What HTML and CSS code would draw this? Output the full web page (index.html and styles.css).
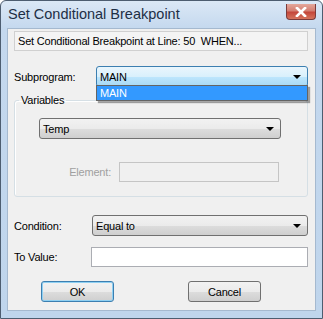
FILE: index.html
```html
<!DOCTYPE html>
<html lang="en">
<head>
    <meta charset="UTF-8">
    <title>Set Conditional Breakpoint</title>
    <link rel="stylesheet" href="styles.css">
</head>
<body>
    <!-- Ventana del diálogo -->
    <div class="window">
        <div class="titlebar">
            <span class="title">Set Conditional Breakpoint</span>
            <span class="close-btn">
                <svg width="14" height="10" viewBox="0 0 14 10">
                    <path d="M3 1 L11 9 M11 1 L3 9" stroke="#ffffff" stroke-width="2.6" stroke-linecap="square"/>
                </svg>
            </span>
        </div>

        <div class="client">
            <div class="info-box">Set Conditional Breakpoint at Line: 50&nbsp; WHEN...</div>

            <!-- Subprograma -->
            <div class="row row-sub">
                <span class="label">Subprogram:</span>
                <div class="combo combo-open combo-sub">
                    <span>MAIN</span>
                    <span class="arrow"></span>
                    <div class="drop-list">MAIN</div>
                </div>
            </div>

            <!-- Variables -->
            <fieldset class="group">
                <legend>Variables</legend>
                <div class="combo combo-temp">
                    <span>Temp</span>
                    <span class="arrow"></span>
                </div>
                <div class="element-row">
                    <span class="label disabled">Element:</span>
                    <div class="textbox textbox-disabled"></div>
                </div>
            </fieldset>

            <!-- Condición -->
            <div class="row row-cond">
                <span class="label">Condition:</span>
                <div class="combo combo-cond">
                    <span>Equal to</span>
                    <span class="arrow"></span>
                </div>
            </div>

            <div class="row row-value">
                <span class="label">To Value:</span>
                <div class="textbox textbox-value"></div>
            </div>

            <!-- Botones -->
            <div class="buttons">
                <button class="btn btn-default">OK</button>
                <button class="btn">Cancel</button>
            </div>
        </div>
    </div>
</body>
</html>
```

FILE: styles.css
```css
/* Estilos generales */
body {
    margin: 0;
    padding: 0;
    background-color: #ffffff;
    font-family: "Liberation Sans", Arial, sans-serif;
    font-size: 11px;
    letter-spacing: -0.2px;
    color: #000;
}

/* Marco de la ventana */
.window {
    width: 323px;
    height: 319px;
    box-sizing: border-box;
    border: 1px solid #4d5d70;
    border-radius: 6px 6px 0 0;
    background: linear-gradient(to bottom, #dbe8f6 0px, #c4d8ee 28px, #bfd5ec 100%);
    padding: 0 7px 7px 7px;
    display: flex;
    flex-direction: column;
}

.titlebar {
    height: 27px;
    display: flex;
    align-items: flex-start;
    justify-content: space-between;
}

.title {
    font-size: 14.5px;
    letter-spacing: 0;
    color: #1e2f45;
    margin-top: 5px;
}

.close-btn {
    width: 30px;
    height: 16px;
    margin-top: 3px;
    margin-right: -1px;
    box-sizing: border-box;
    border: 1px solid #7a3b3b;
    border-radius: 0 0 4px 4px;
    border-top: none;
    background: linear-gradient(to bottom, #e4a89c 0%, #d47f72 45%, #c4473b 55%, #d5745d 100%);
    display: flex;
    align-items: center;
    justify-content: center;
}

/* Área cliente */
.client {
    flex: 1;
    background-color: #f0f0f0;
    border: 1px solid #a5b9cf;
    margin-left: -1px;
    margin-right: -1px;
    padding: 2px 7px 0 6px;
    display: flex;
    flex-direction: column;
}

.info-box {
    height: 20px;
    box-sizing: border-box;
    border: 1px solid #d0d0d0;
    background-color: #f4f4f4;
    padding: 2px 3px;
    line-height: 15px;
    white-space: nowrap;
}

.row {
    display: flex;
    align-items: center;
}

.label {
    line-height: 14px;
}

.label.disabled {
    color: #a0a0a0;
}

.row-sub {
    margin-top: 15px;
    position: relative;
    z-index: 2;
}

.row-sub .label {
    width: 82px;
}

.row-cond {
    margin-top: 18px;
}

.row-cond .label,
.row-value .label {
    width: 78px;
}

.row-value {
    margin-top: 11px;
}

/* Combos estilo Windows 7 */
.combo {
    position: relative;
    height: 21px;
    box-sizing: border-box;
    border: 1px solid #707070;
    border-radius: 3px;
    background: linear-gradient(to bottom, #f2f2f2 0%, #ebebeb 50%, #dddddd 51%, #cfcfcf 100%);
    display: flex;
    align-items: center;
    padding-left: 3px;
    line-height: 14px;
}

.combo .arrow {
    position: absolute;
    right: 6px;
    top: 8px;
    width: 0;
    height: 0;
    border-left: 4px solid transparent;
    border-right: 4px solid transparent;
    border-top: 4px solid #000;
}

.combo-open {
    border-color: #3c7fb1;
    background: linear-gradient(to bottom, #eaf6fd 0%, #d9f0fc 50%, #bee6fd 51%, #a7d9f5 100%);
}

.combo-sub {
    flex: 1;
}

.drop-list {
    position: absolute;
    left: -1px;
    right: -1px;
    top: 18px;
    height: 16px;
    box-sizing: border-box;
    border: 1px solid #646464;
    background-color: #3399ff;
    color: #fff;
    padding-left: 3px;
    line-height: 14px;
    box-shadow: 2px 2px 1px rgba(0, 0, 0, 0.35);
}

.combo-cond {
    flex: 1;
}

/* Grupo Variables */
.group {
    margin: 6px 0 0 0;
    padding: 11px 26px 14px 24px;
    border: 1px solid #d5dfe5;
    border-radius: 3px;
    box-shadow: inset 1px 1px 0 #ffffff;
}

.group legend {
    padding: 0 2px;
    margin-left: -20px;
    line-height: 14px;
}

.element-row {
    display: flex;
    align-items: center;
    margin-top: 23px;
}

.element-row .label {
    width: 80px;
    text-align: right;
    padding-right: 8px;
    box-sizing: border-box;
}

/* Cajas de texto */
.textbox {
    height: 20px;
    box-sizing: border-box;
    border: 1px solid #abadb3;
    background-color: #fff;
}

.textbox-disabled {
    flex: 1;
    margin-right: 2px;
    border-color: #c5c5c5;
    background-color: #f0f0f0;
}

.textbox-value {
    flex: 1;
    margin-left: -1px;
}

/* Botones */
.buttons {
    display: flex;
    margin-top: 14px;
    padding-left: 27px;
    gap: 74px;
}

.btn {
    width: 73px;
    height: 21px;
    box-sizing: border-box;
    border: 1px solid #707070;
    border-radius: 3px;
    background: linear-gradient(to bottom, #f2f2f2 0%, #ebebeb 50%, #dddddd 51%, #cfcfcf 100%);
    font-family: "Liberation Sans", Arial, sans-serif;
    font-size: 11px;
    letter-spacing: -0.2px;
    color: #000;
    padding: 0;
}

.btn-default {
    border-color: #3c7fb1;
    box-shadow: inset 0 0 0 1px #8fd0f2;
}
```
